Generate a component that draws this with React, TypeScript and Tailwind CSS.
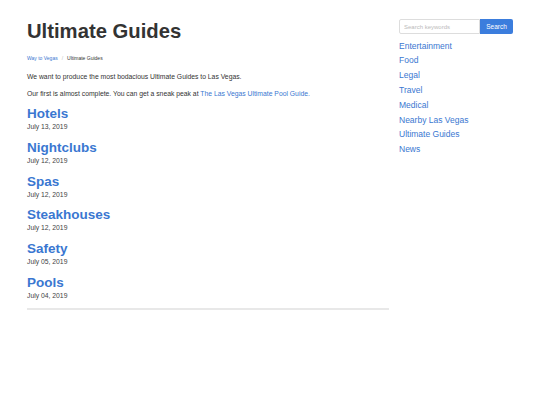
import React from 'react';

const GUIDES = [
  { title: 'Hotels', date: 'July 13, 2019' },
  { title: 'Nightclubs', date: 'July 12, 2019' },
  { title: 'Spas', date: 'July 12, 2019' },
  { title: 'Steakhouses', date: 'July 12, 2019' },
  { title: 'Safety', date: 'July 05, 2019' },
  { title: 'Pools', date: 'July 04, 2019' },
];

const CATEGORIES = [
  'Entertainment',
  'Food',
  'Legal',
  'Travel',
  'Medical',
  'Nearby Las Vegas',
  'Ultimate Guides',
  'News',
];

const App: React.FC = () => {
  return (
    <div className="w-[540px] h-[405px] bg-white font-['Liberation_Sans',Arial,sans-serif] text-[#333]">
      <div className="flex gap-[10px] px-[27px] pt-[19px]">

        {/* Main column */}
        <main className="w-[362px]">
          <h1 className="text-[20.25px] leading-[24px] font-bold text-[#333]">Ultimate Guides</h1>

          <nav className="mt-[11px] text-[5px] leading-[9px] flex items-center">
            <a href="#" className="text-[#3a77d1]">Way to Vegas</a>
            <span className="mx-[4px] text-[#bbb]">/</span>
            <span className="text-[#333]">Ultimate Guides</span>
          </nav>

          <p className="mt-[9px] text-[6.8px] leading-[10px]">
            We want to produce the most bodacious Ultimate Guides to Las Vegas.
          </p>
          <p className="mt-[7px] text-[6.8px] leading-[10px]">
            Our first is almost complete. You can get a sneak peak at{' '}
            <a href="#" className="text-[#3a77d1]">The Las Vegas Ultimate Pool Guide.</a>
          </p>

          <div className="mt-[7.3px] flex flex-col gap-[8.7px]">
            {GUIDES.map((g) => (
              <article key={g.title}>
                <h2 className="text-[13.5px] leading-[16px] font-bold text-[#3a77d1]">
                  <a href="#">{g.title}</a>
                </h2>
                <div className="text-[6.8px] leading-[9px] text-[#444]">{g.date}</div>
              </article>
            ))}
          </div>

          <hr className="mt-[8px] border-0 h-[2px] bg-[#e8e8e8]" />
        </main>

        {/* Sidebar */}
        <aside className="w-[114px]">
          <form className="flex h-[15px]" onSubmit={(e) => e.preventDefault()}>
            <input
              type="text"
              placeholder="Search keywords"
              className="w-[81px] h-full border border-[#ddd] rounded-l-[2px] px-[4px] text-[6px] placeholder:text-[#bbb] outline-none"
            />
            <button
              type="submit"
              className="w-[33px] h-full bg-[#3b7ddd] text-white text-[6.5px] rounded-r-[2px]"
            >
              Search
            </button>
          </form>

          <ul className="mt-[4.6px]">
            {CATEGORIES.map((c) => (
              <li key={c} className="text-[8.5px] leading-[14.8px]">
                <a href="#" className="text-[#3a77d1]">{c}</a>
              </li>
            ))}
          </ul>
        </aside>
      </div>
    </div>
  );
};

export default App;
